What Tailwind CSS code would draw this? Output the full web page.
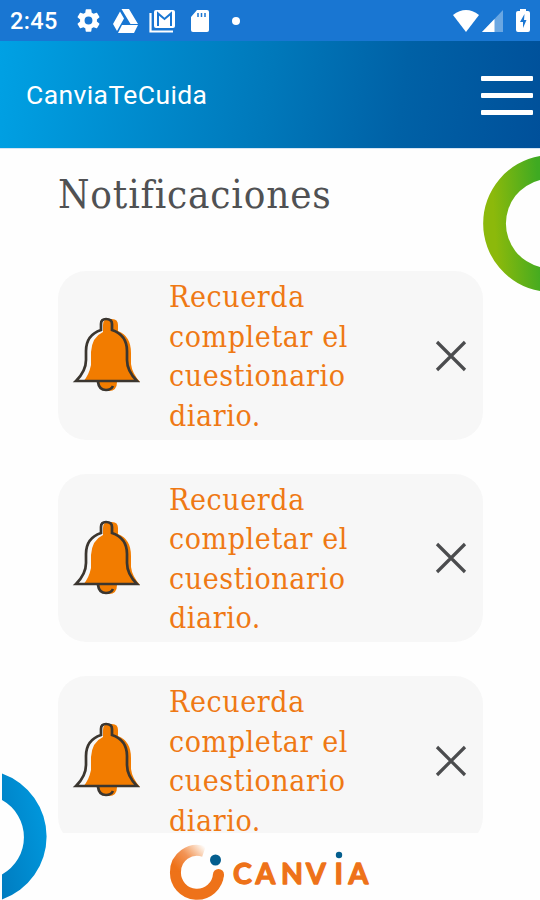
<!DOCTYPE html>
<html lang="es">
<head>
<meta charset="utf-8">
<title>CanviaTeCuida</title>
<script src="https://cdn.jsdelivr.net/npm/@tailwindcss/browser@4"></script>
</head>
<body class="w-[540px] h-[900px] overflow-hidden bg-[#fefefe]">
<svg class="absolute w-0 h-0" aria-hidden="true">
  <symbol id="bell" viewBox="0 0 85 90">
    <path fill="#f27c00" d="M38 22V15Q38 9 43 9H47Q53 9 53 15V21Q66 26 66 43V54Q67 63 75 72H18Q24 65 26 55V42Q27 27 38 22ZM33 72H52Q52 81 44 81Q35 81 33 72Z"/>
    <path fill="none" stroke="#3b3630" stroke-width="2.7" d="M36 20V14Q36 9 41 9Q47 9 47 14V20Q62 25 62 41V50Q62 61 72 71H11Q21 61 21 50V41Q21 25 36 20ZM33 72Q34 80 41 80Q46 80 48 76"/>
  </symbol>
  <symbol id="close" viewBox="0 0 32 32"><path d="M2 2L30 30M30 2L2 30" stroke="#4b4c4e" stroke-width="3.2" fill="none"/></symbol>
</svg>
<div class="relative flex flex-col h-full overflow-hidden">
  <div class="flex h-[41px] shrink-0 items-center bg-[#1976d2] text-white">
    <span class="ml-[10px] mt-[2px] w-[50px] font-['Roboto'] text-[23.5px] font-medium leading-none tracking-[0.4px]">2:45</span>
    <svg class="ml-[15px]" width="27" height="27" viewBox="0 0 24 24" fill="#fff"><path d="M19.43 12.98c.04-.32.07-.64.07-.98s-.03-.66-.07-.98l2.11-1.65c.19-.15.24-.42.12-.64l-2-3.46c-.12-.22-.39-.3-.61-.22l-2.49 1c-.52-.4-1.08-.73-1.69-.98l-.38-2.65C14.46 2.18 14.25 2 14 2h-4c-.25 0-.46.18-.49.42l-.38 2.65c-.61.25-1.17.59-1.69.98l-2.49-1c-.23-.09-.49 0-.61.22l-2 3.46c-.13.22-.07.49.12.64l2.11 1.65c-.04.32-.07.65-.07.98s.03.66.07.98l-2.11 1.65c-.19.15-.24.42-.12.64l2 3.46c.12.22.39.3.61.22l2.49-1c.52.4 1.08.73 1.69.98l.38 2.65c.03.24.24.42.49.42h4c.25 0 .46-.18.49-.42l.38-2.65c.61-.25 1.17-.59 1.69-.98l2.49 1c.23.09.49 0 .61-.22l2-3.46c.12-.22.07-.49-.12-.64zM12 15.5A3.5 3.5 0 1 1 12 8.500a3.500 3.500 0 0 1 0 7z"/></svg>
    <svg class="ml-[10px]" width="27" height="26" viewBox="0 0 27 26" fill="#fff"><path d="M9.500 1H17L26 16H18.500ZM8 3.500L12 10.500L5 23L1 16ZM10 17H26L22 25H6Z"/></svg>
    <svg class="ml-[10px]" width="27" height="24" viewBox="0 0 27 24" fill="none"><rect x="5" y="1" width="21" height="18" rx="2" fill="#fff"/><path d="M1.500 4V22.500H24" stroke="#fff" stroke-width="2.200"/><path d="M9 17V4.500L15.500 10L22 4.500V17" stroke="#1976d2" stroke-width="2"/></svg>
    <svg class="ml-[14px]" width="20" height="24" viewBox="0 0 20 24"><path fill="#fff" d="M7 1H17Q19 1 19 3V21Q19 23 17 23H3Q1 23 1 21V8Z"/><path d="M8 4V8M11.500 4V8M15 4V8" stroke="#1976d2" stroke-width="1.500"/></svg>
    <span class="ml-[22px] size-[8px] rounded-full bg-white"></span>
    <svg class="ml-auto" width="28" height="24" viewBox="0 0 28 24"><path fill="#fff" d="M1 6Q14-4 27 6L14 23Z"/></svg>
    <svg class="ml-[2px]" width="22" height="24" viewBox="0 0 22 24"><path fill="#6aa7e2" d="M21 1V23H0Z"/><path fill="#fff" d="M12.500 10V23H0Z"/></svg>
    <svg class="ml-[11px] mr-[9px]" width="16" height="25" viewBox="0 0 16 25"><path fill="#fff" d="M5 1H11V3H13Q15 3 15 5V22Q15 24 13 24H3Q1 24 1 22V5Q1 3 3 3H5Z"/><path fill="#1976d2" d="M9.500 6L5 14H8V20L11.500 12H9Z"/></svg>
  </div>
  <header class="flex h-[108px] shrink-0 items-center justify-between border-b border-[#d5e4f3] bg-linear-[98deg,#00a1e4_0%,#0078ba_50%,#0061a6_74%,#00509a_100%] pl-[26px] pr-[7px] pt-[2px] text-white">
    <h1 class="font-['Roboto'] text-[26.500px] leading-none tracking-[0.4px]">CanviaTeCuida</h1>
    <div class="flex w-[52px] flex-col gap-[12px]">
      <span class="h-[5px] rounded-[1px] bg-white"></span>
      <span class="h-[5px] rounded-[1px] bg-white"></span>
      <span class="h-[5px] rounded-[1px] bg-white"></span>
    </div>
  </header>
  <main class="h-[684px] shrink-0 overflow-hidden pl-[58px] pr-[57px] font-['DejaVu_Serif_Condensed','DejaVu_Serif',serif]">
    <h2 class="mt-[20px] h-[50px] whitespace-nowrap text-[40px] leading-[50px] tracking-[0.85px] text-[#505153]">Notificaciones</h2>
    <div class="mt-[52px] flex flex-col gap-[34px] text-[30px] leading-[39.500px] tracking-[0.6px] text-[#ef7914]">
      <article class="flex h-[168.500px] items-center rounded-[28px] bg-[#f7f7f7]">
        <svg class="ml-[7px] h-[90px] w-[85px] shrink-0"><use href="#bell"/></svg>
        <p class="ml-[19px] mt-[2px] flex-1 whitespace-nowrap">Recuerda<br>completar el<br>cuestionario<br>diario.</p>
        <svg class="mr-[16px] mt-[1px] size-[32px] shrink-0"><use href="#close"/></svg>
      </article>
      <article class="flex h-[168.500px] items-center rounded-[28px] bg-[#f7f7f7]">
        <svg class="ml-[7px] h-[90px] w-[85px] shrink-0"><use href="#bell"/></svg>
        <p class="ml-[19px] mt-[2px] flex-1 whitespace-nowrap">Recuerda<br>completar el<br>cuestionario<br>diario.</p>
        <svg class="mr-[16px] mt-[1px] size-[32px] shrink-0"><use href="#close"/></svg>
      </article>
      <article class="flex h-[168.500px] items-center rounded-[28px] bg-[#f7f7f7]">
        <svg class="ml-[7px] h-[90px] w-[85px] shrink-0"><use href="#bell"/></svg>
        <p class="ml-[19px] mt-[2px] flex-1 whitespace-nowrap">Recuerda<br>completar el<br>cuestionario<br>diario.</p>
        <svg class="mr-[16px] mt-[1px] size-[32px] shrink-0"><use href="#close"/></svg>
      </article>
    </div>
  </main>
  <footer class="flex h-[67px] shrink-0 justify-center">
    <svg width="220" height="67" viewBox="160 833 220 67">
      <defs><linearGradient id="ring" gradientUnits="userSpaceOnUse" x1="206" y1="848" x2="180" y2="872"><stop offset="0" stop-color="#f27a1c" stop-opacity="0"/><stop offset=".55" stop-color="#f08138" stop-opacity=".85"/><stop offset="1" stop-color="#ee7219"/></linearGradient></defs>
      <path d="M204 851.500A21.500 21.500 0 0 0 175.500 872" fill="none" stroke="url(#ring)" stroke-width="11"/>
      <path d="M175.500 871.500A21.500 21.500 0 0 0 218.500 874" fill="none" stroke="#ee7219" stroke-width="11"/>
      <circle cx="218.500" cy="874.500" r="5.500" fill="#ee7219"/>
      <circle cx="215.500" cy="860" r="5.500" fill="#045e8e"/>
      <text y="883.500" x="233 255.500 281 306 334.500 348.500" font-family="Lato, sans-serif" font-size="28.500" font-weight="700" fill="#ee7219" stroke="#ee7219" stroke-width="1.300" stroke-linejoin="round">CANVIA</text>
      <circle cx="339" cy="855" r="3.200" fill="#045e8e"/>
    </svg>
  </footer>
  <svg class="absolute left-[482px] top-[155px]" width="58" height="137" viewBox="0 0 58 137"><defs><linearGradient id="green" x1="0" x2="1" y1=".55" y2=".4"><stop offset=".2" stop-color="#8cb90b"/><stop offset="1" stop-color="#3faa22"/></linearGradient></defs><path fill="url(#green)" d="M58 1A68.500 68.500 0 0 0 58 136V112A44.800 44.800 0 0 1 58 25Z"/></svg>
  <svg class="absolute left-0 top-[772px]" width="48" height="128" viewBox="0 0 48 128"><defs><linearGradient id="blue" x1="0" y1="1" x2="1" y2=".4"><stop offset="0" stop-color="#007cc0"/><stop offset="1" stop-color="#0097dc"/></linearGradient></defs><path fill="url(#blue)" d="M2 1.500A66.800 66.800 0 0 1 2 127.500V102.500A42.600 42.600 0 0 0 2 28Z"/></svg>
</div>
</body>
</html>
